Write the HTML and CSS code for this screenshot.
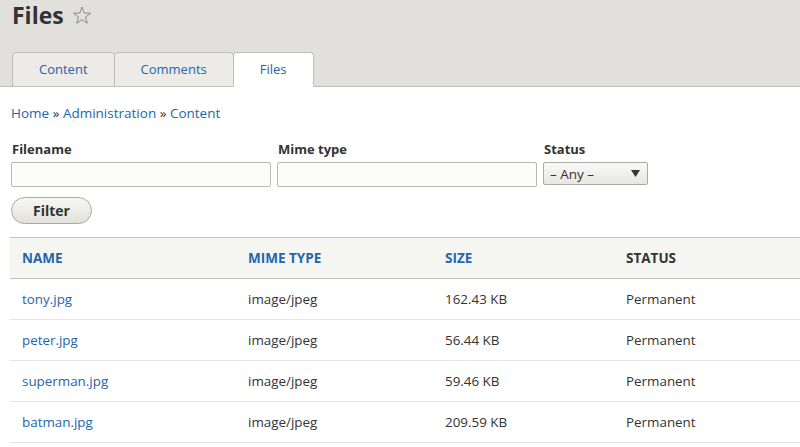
FILE: index.html
```html
<!DOCTYPE html>
<html lang="en">
<head>
<meta charset="utf-8">
<title>Files</title>
<link rel="stylesheet" href="styles.css">
</head>
<body>
<header class="page-header">
  <h1 class="page-title">Files
    <svg class="star" width="20" height="20" viewBox="0 0 20 20" aria-hidden="true">
      <polygon points="10,1 12.17,7.01 18.56,7.22 13.52,11.14 15.29,17.28 10,13.7 4.71,17.28 6.48,11.14 1.44,7.22 7.83,7.01" fill="none" stroke="#8a8a86" stroke-width="1" stroke-linejoin="round"/>
    </svg>
  </h1>
  <ul class="tabs">
    <li class="tab"><a href="#">Content</a></li>
    <li class="tab"><a href="#">Comments</a></li>
    <li class="tab tab-active"><a href="#">Files</a></li>
  </ul>
</header>
<main class="content">
  <nav class="breadcrumb"><a href="#">Home</a> <span class="sep">»</span> <a href="#">Administration</a> <span class="sep">»</span> <a href="#">Content</a></nav>
  <form class="filters">
    <div class="filter-row">
      <div class="field">
        <label class="field-label">Filename</label>
        <input class="text-input" type="text">
      </div>
      <div class="field">
        <label class="field-label">Mime type</label>
        <input class="text-input" type="text">
      </div>
      <div class="field">
        <label class="field-label">Status</label>
        <div class="select"><span>– Any –</span>
          <svg class="select-arrow" width="9" height="7" viewBox="0 0 9 7" aria-hidden="true"><polygon points="0,0 9,0 4.5,7" fill="#333"/></svg>
        </div>
      </div>
    </div>
    <button class="button" type="button">Filter</button>
  </form>
  <table class="files-table">
    <colgroup>
      <col class="col-name"><col class="col-mime"><col class="col-size"><col class="col-status">
    </colgroup>
    <thead>
      <tr>
        <th><a href="#">Name</a></th>
        <th><a href="#">Mime type</a></th>
        <th><a href="#">Size</a></th>
        <th>Status</th>
      </tr>
    </thead>
    <tbody>
      <tr><td><a href="#">tony.jpg</a></td><td>image/jpeg</td><td>162.43 KB</td><td>Permanent</td></tr>
      <tr><td><a href="#">peter.jpg</a></td><td>image/jpeg</td><td>56.44 KB</td><td>Permanent</td></tr>
      <tr><td><a href="#">superman.jpg</a></td><td>image/jpeg</td><td>59.46 KB</td><td>Permanent</td></tr>
      <tr><td><a href="#">batman.jpg</a></td><td>image/jpeg</td><td>209.59 KB</td><td>Permanent</td></tr>
    </tbody>
  </table>
</main>
</body>
</html>
```
FILE: styles.css
```css
* { box-sizing: border-box; }
html, body { height: 100%; }
body {
  margin: 0;
  font-family: "Open Sans", "DejaVu Sans", sans-serif;
  font-size: 13px;
  color: #333;
  background: #fff;
  overflow: hidden;
}
a { color: #2366ab; text-decoration: none; }

.page-header {
  background: #e1e0dc;
  border-bottom: 1px solid #bfbfba;
  padding: 1px 0 0 12px;
}
.page-title {
  margin: 0;
  font-size: 23px;
  font-weight: 700;
  line-height: 28px;
  color: #333;
  display: flex;
  align-items: center;
  gap: 8px;
}
.star { margin-top: 2px; }

.tabs {
  list-style: none;
  margin: 23px 0 -1px;
  padding: 0;
  display: flex;
}
.tab {
  border: 1px solid #bfbfba;
  border-radius: 4px 4px 0 0;
  background: #ecebe8;
}
.tab + .tab { margin-left: -1px; }
.tab a {
  display: block;
  padding: 0 26px;
  line-height: 33px;
  font-size: 13px;
}
.tab-active {
  background: #fff;
  border-bottom-color: #fff;
}

.content { padding: 0 0 0 11px; }
.breadcrumb {
  margin-top: 17px;
  line-height: 18px;
  font-size: 13.5px;
}
.sep { color: #333; }

.filters { margin-top: 18px; }
.filter-row { display: flex; gap: 6px; }
.field { display: flex; flex-direction: column; }
.field-label {
  font-weight: 700;
  line-height: 18px;
  margin: 0 0 4px 1px;
}
.text-input {
  width: 260px;
  height: 25px;
  border: 1px solid #b8b8b4;
  border-radius: 2px;
  background: #fcfcfa;
  margin: 0;
}
.select {
  width: 105px;
  height: 23px;
  border: 1px solid #a9a9a5;
  border-radius: 2px;
  background: linear-gradient(#f9f9f7, #e6e6e2);
  display: flex;
  align-items: center;
  justify-content: space-between;
  padding: 0 7px 0 6px;
  font-size: 13.5px;
}
.button {
  display: block;
  margin-top: 10px;
  width: 81px;
  height: 27px;
  padding: 0;
  border: 1px solid #a8a8a4;
  border-radius: 14px;
  background: linear-gradient(#f6f6f3, #e2e1dc);
  font-family: "Open Sans", "DejaVu Sans", sans-serif;
  font-size: 14px;
  font-weight: 700;
  color: #333;
}

.files-table {
  margin: 13px 0 0 -1px;
  width: calc(100% + 1px);
  border-collapse: collapse;
  table-layout: fixed;
}
.col-name { width: 226px; }
.col-mime { width: 197px; }
.col-size { width: 181px; }
.files-table th {
  background: #f5f5f2;
  border-top: 1px solid #c4c3be;
  border-bottom: 1px solid #bfbfba;
  padding: 11px 12px;
  line-height: 18px;
  text-align: left;
  text-transform: uppercase;
  font-size: 13.5px;
  font-weight: 700;
  color: #333;
}
.files-table td {
  border-bottom: 1px solid #e6e5e1;
  padding: 11px 12px;
  line-height: 18px;
  font-size: 13.4px;
}
```
